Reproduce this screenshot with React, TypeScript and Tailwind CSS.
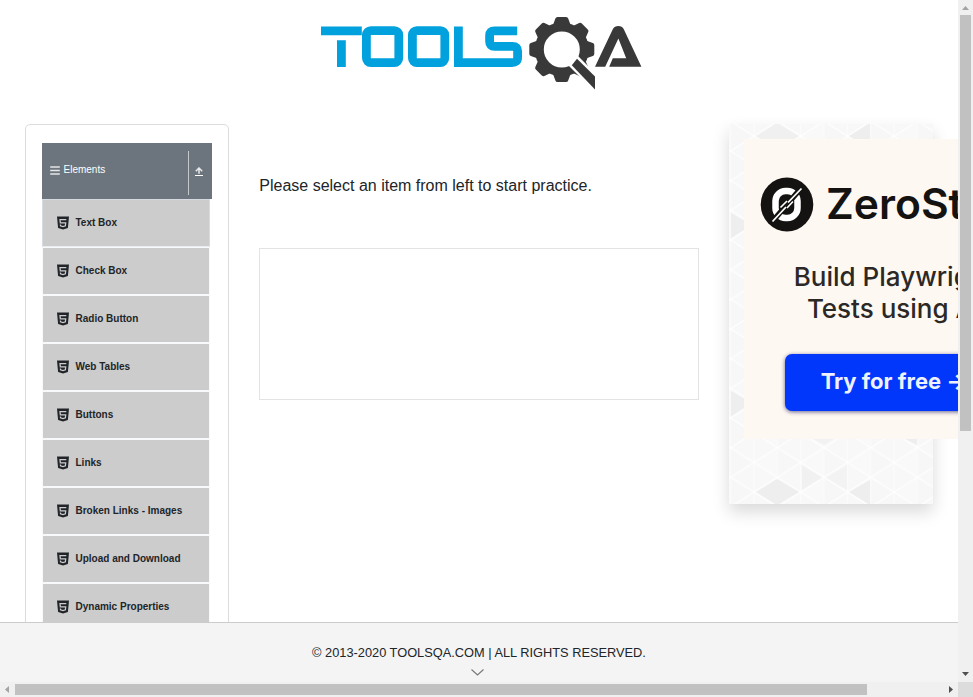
import React from "react";

const items = [
  "Text Box",
  "Check Box",
  "Radio Button",
  "Web Tables",
  "Buttons",
  "Links",
  "Broken Links - Images",
  "Upload and Download",
  "Dynamic Properties",
];

function Logo() {
  const teeth = [0, 45, 90, 135, 180, 225, 270, 315];
  return (
    <svg className="h-[80px] w-[330px]" viewBox="316 14 330 80">
      <g fill="none" stroke="#00a1dd" strokeWidth="8.8">
        <path d="M321 30.8H361.8M341.4 40.2V67" />
        <rect x="366.4" y="30.6" width="32.4" height="32" rx="4.5" />
        <rect x="412.4" y="30.6" width="32.4" height="32" rx="4.5" />
        <path d="M517.2 30.8H494.5Q489.6 30.8 489.6 35.5V41.5Q489.6 46.4 494.5 46.4H512.5Q517.6 46.4 517.6 51V57.4Q517.6 62.6 512 62.6H458.4V26.4" />
      </g>
      <g fill="#3a393a">
        <circle cx="561.8" cy="49.5" r="22.5" fill="none" stroke="#3a393a" strokeWidth="9" />
        {teeth.map((a) => (
          <path
            key={a}
            transform={`rotate(${a} 561.8 49.5)`}
            d="M552.8 25.5L555.4 18.5Q555.8 17 557.6 17H566Q567.8 17 568.2 18.5L570.8 25.5Z"
          />
        ))}
        <path d="M568.5 65.5L578 56L600 78V92H595Z" fill="#fff" />
        <path d="M577 58.8L595 76.4V89.4L571.8 65.3Z" />
        <path d="M595 66.8L612.8 29.2Q614.5 26 618.3 26T623.8 29.2L641.4 66.8H609.2L612.8 58.2H626.2L618.4 38.4L605.2 66.8Z" />
      </g>
    </svg>
  );
}

function Html5Icon() {
  return (
    <svg className="h-[14px] w-[12px] shrink-0" viewBox="0 0 12 14" fill="none">
      <path d="M0 .5H12L10.9 11.9L6 13.6L1.1 11.9Z" fill="#212529" />
      <path d="M9.3 3.5H3L3.3 6.8H8.7L8.4 9.8L6 10.5L3.5 9.8L3.4 8.5" stroke="#ccc" strokeWidth="1.25" />
    </svg>
  );
}

function Sidebar() {
  return (
    <aside className="h-[560px] w-[204px] shrink-0 rounded-[5px] border border-[#dcdcdc] pl-4 pt-[18px]">
      <div className="flex h-14 w-[170px] items-center bg-[#6c757d] pl-2 text-[10px] text-white">
        <svg className="-mt-[3px] mr-[3.5px] h-[10px] w-[10px]" viewBox="0 0 10 10">
          <path d="M.2 2H9.8M.2 5.5H9.8M.2 9H9.8" stroke="#e4e6e7" strokeWidth="1.7" />
        </svg>
        <span className="-mt-1 grow leading-[15px]">Elements</span>
        <div className="mt-1 flex h-11 w-6 items-center justify-center border-l border-[#c5c9c8] pr-[3px]">
          <svg className="-mt-[4px] h-[9px] w-2" viewBox="0 0 8 9">
            <path d="M0 8.5H8" stroke="#fff" strokeWidth="1" />
            <path d="M4 6.8V1M.8 4.2L4 1L7.2 4.2" fill="none" stroke="#e9eaeb" strokeWidth="1.5" />
          </svg>
        </div>
      </div>
      <ul className="w-[168px]">
        {items.map((item, i) => (
          <li
            key={item}
            className={`flex h-12 items-center gap-[6.5px] border bg-[#ccc] pl-[14px] text-[10px] font-bold text-[#212529] ${
              i === 0 ? "border-[#d5dbe0] border-b-[#e9edf2]" : "border-[#f8f9fa]"
            }`}
          >
            <Html5Icon />
            <span className="-mt-[2px] leading-[15px]">{item}</span>
          </li>
        ))}
      </ul>
    </aside>
  );
}

const DX = 23.35;
const DY = 29.67;

function Triangles() {
  const tone = (pts: string, fill: string) => <polygon key={pts} points={pts} fill={fill} />;
  return (
    <svg className="absolute inset-0 h-full w-full" viewBox="729 124 204 380">
      <defs>
        <pattern id="tri" x="730.6" y="121.3" width={DX * 2} height={DY} patternUnits="userSpaceOnUse">
          <rect width="46.7" height="29.67" fill="#f8f8f8" />
          <path d="M0 0L23.35 14.83L0 29.67Z" fill="#f7f7f7" />
          <path d="M46.7 0L23.35 14.83L46.7 29.67Z" fill="#f9f9f9" />
          <path d="M0 0V29.67M46.7 0V29.67M23.35 0V29.67" stroke="#fcfcfc" strokeWidth="1" />
          <path d="M0 0L46.7 29.67M46.7 0L0 29.67" stroke="#fff" strokeWidth="1.2" />
        </pattern>
      </defs>
      <rect x="729" y="124" width="204" height="380" fill="url(#tri)" />
      {tone("756,492 777,479 799,492 777,505", "#eeeeee")}
      {tone("849,492 870,480 870,505", "#eeeeee")}
      {tone("802,465 802,490 822,477.5", "#f1f1f1")}
      {tone("847,465 847,490 826,477.5", "#f3f3f3")}
      {tone("905,439 917,439 917,445", "#eeeeee")}
      {tone("813,439 833,439 824,445", "#f2f2f2")}
      {tone("756,136 777,123 799,136 777,149", "#f0f0f0")}
      {tone("849,136 870,123 870,149", "#eeeeee")}
      {tone("731,213 731,238 752,225", "#eeeeee")}
      {tone("731,391 731,416 752,403", "#eeeeee")}
    </svg>
  );
}

function Ad() {
  return (
    <aside className="relative h-[380px] w-[204px] shrink-0 bg-[#f8f8f8] p-[15px] shadow-[0_8px_16px_rgba(0,0,0,0.15)]">
      <Triangles />
      <div className="relative flex h-[300px] w-[300px] flex-col items-center whitespace-nowrap bg-[#fef8f2] font-[Inter,sans-serif] text-[#2b2826]">
        <div className="mt-[37px] flex h-[56px] w-full items-center pl-4">
          <svg className="h-[55px] w-[54px] shrink-0" viewBox="0 0 54 55">
            <ellipse cx="27" cy="27.5" rx="26.3" ry="27" fill="#141312" />
            <rect x="15.5" y="14" width="22" height="27" rx="10" fill="none" stroke="#fff" strokeWidth="6.5" />
            <path d="M12 45L42 10" stroke="#141312" strokeWidth="5.5" />
            <path d="M12.5 44.5L26 30M41.5 11.5L28 25.5" stroke="#fff" strokeWidth="1.8" />
            <path d="M20.5 30.5L27 24M27 31L33 24.5" stroke="#fff" strokeWidth="1.6" />
          </svg>
          <span className="ml-[12px] text-[42.6px] font-semibold leading-[56px] text-[#141312]">ZeroStep</span>
        </div>
        <p className="mt-[29px] text-center text-[26px] font-medium leading-[32px]">
          Build Playwright
          <br />
          Tests using AI
        </p>
        <div className="mt-[28.5px] flex h-[57px] w-[218px] items-center justify-center rounded-[7px] bg-[#0037fa] text-[22px] font-bold text-[#eef1ff] shadow-[0_1px_4px_rgba(0,0,80,0.6)]">
          <span className="-mt-[2px]">Try for free →</span>
        </div>
      </div>
    </aside>
  );
}

export default function App() {
  return (
    <div className="grid h-[697px] w-[973px] grid-cols-[958px_15px] grid-rows-[682px_15px] overflow-hidden bg-white font-['Liberation_Sans',Arial,sans-serif] text-[#212529]">
      <div className="flex flex-col overflow-hidden">
        <header className="flex h-[124px] shrink-0 justify-center pl-[4px] pt-[14px]">
          <Logo />
        </header>
        <main className="-mt-5 box-content flex h-[498px] shrink-0 items-start overflow-hidden pl-[25px] pt-5">
          <Sidebar />
          <section className="ml-[30px] w-[440px] shrink-0 pt-[50px]">
            <p className="pl-[0.3px] text-base leading-6">Please select an item from left to start practice.</p>
            <div className="mt-[50px] h-[152px] border border-[#e2e3e4]" />
          </section>
          <div className="ml-[30px]">
            <Ad />
          </div>
        </main>
        <footer className="flex h-[60px] shrink-0 flex-col items-center border-t border-[#ccc] bg-[#f4f4f4] pt-5">
          <span className="text-[12.8px] leading-5">© 2013-2020 TOOLSQA.COM | ALL RIGHTS RESERVED.</span>
          <svg className="-ml-1 mt-[6px] h-[7px] w-[13px]" viewBox="0 0 13 7">
            <path d="M.5 .5L6.5 6L12.5 .5" fill="none" stroke="#777" strokeWidth="1.1" />
          </svg>
        </footer>
      </div>
      <div className="flex flex-col items-center bg-[#f0f0f0]">
        <svg className="h-[15px] w-[15px] shrink-0" viewBox="0 0 15 15">
          <path d="M4 10H11L7.5 6Z" fill="#a3a3a3" />
        </svg>
        <div className="-ml-px h-[416px] w-[11px] bg-[#c1c1c1]" />
        <div className="grow" />
        <svg className="h-[15px] w-[15px] shrink-0" viewBox="0 0 15 15">
          <path d="M4 5H11L7.5 9Z" fill="#505050" />
        </svg>
      </div>
      <div className="flex items-center bg-[#f0f0f0]">
        <svg className="h-[15px] w-[15px] shrink-0" viewBox="0 0 15 15">
          <path d="M9 4V11L5 7.5Z" fill="#a3a3a3" />
        </svg>
        <div className="h-[11px] w-[852px] bg-[#c1c1c1]" />
        <div className="grow" />
        <svg className="h-[15px] w-[15px] shrink-0" viewBox="0 0 15 15">
          <path d="M6 4V11L10 7.5Z" fill="#505050" />
        </svg>
      </div>
      <div className="bg-[#dcdcdc]" />
    </div>
  );
}
